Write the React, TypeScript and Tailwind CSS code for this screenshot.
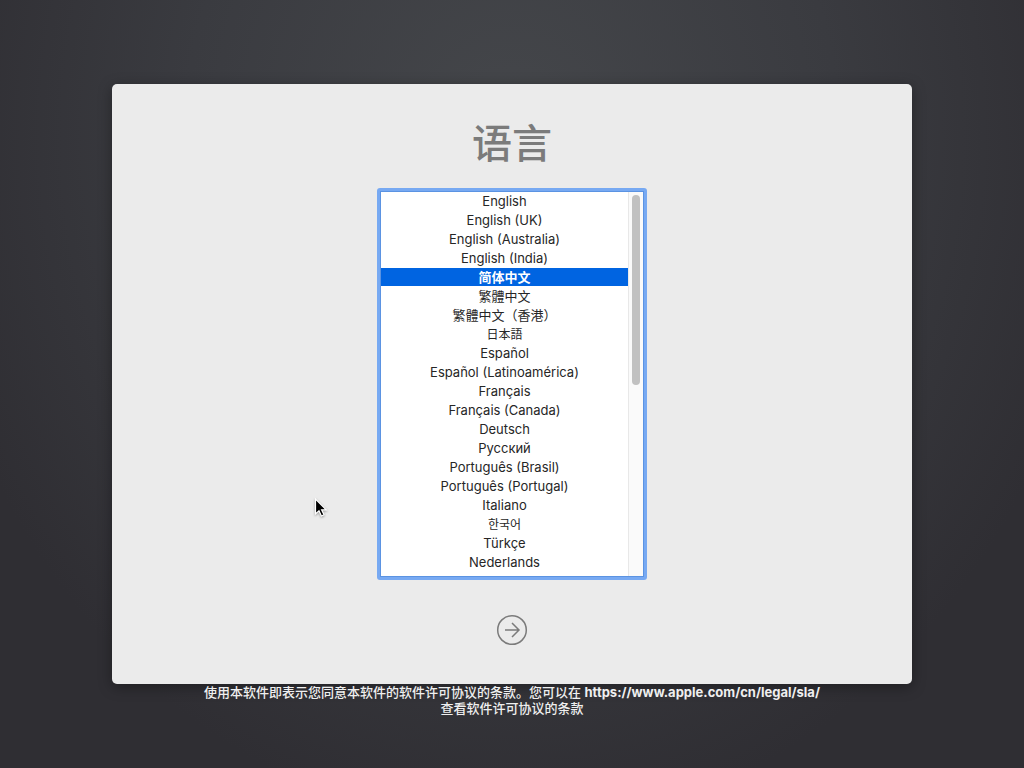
import { useState, type UIEvent } from "react";

const LANGUAGES = [
  { label: "English", lang: "en" },
  { label: "English (UK)", lang: "en-GB" },
  { label: "English (Australia)", lang: "en-AU" },
  { label: "English (India)", lang: "en-IN" },
  { label: "简体中文", lang: "zh-CN" },
  { label: "繁體中文", lang: "zh-TW" },
  { label: "繁體中文（香港）", lang: "zh-HK" },
  { label: "日本語", lang: "ja" },
  { label: "Español", lang: "es" },
  { label: "Español (Latinoamérica)", lang: "es-419" },
  { label: "Français", lang: "fr" },
  { label: "Français (Canada)", lang: "fr-CA" },
  { label: "Deutsch", lang: "de" },
  { label: "Русский", lang: "ru" },
  { label: "Português (Brasil)", lang: "pt-BR" },
  { label: "Português (Portugal)", lang: "pt-PT" },
  { label: "Italiano", lang: "it" },
  { label: "한국어", lang: "ko" },
  { label: "Türkçe", lang: "tr" },
  { label: "Nederlands", lang: "nl" },
];

function fontSize(lang: string) {
  return lang === "ja" || lang === "ko" ? "text-[12px]" : "text-[13px]";
}

function LanguageList() {
  const [selected, setSelected] = useState("zh-CN");
  const [scrollTop, setScrollTop] = useState(0);

  return (
    <div className="flex h-[392px] w-[270px] rounded-[3px] bg-[#77a9f2] p-[3px]">
      <div className="flex min-w-0 flex-1 border border-[#5b93e2] bg-white">
        <ul
          role="listbox"
          aria-labelledby="title"
          onScroll={(e: UIEvent<HTMLUListElement>) => setScrollTop(e.currentTarget.scrollTop)}
          className="min-w-0 flex-1 overflow-y-auto [scrollbar-width:none]"
        >
          {LANGUAGES.map(({ label, lang }) => (
            <li key={lang} role="presentation" className="pb-px">
              <button
                type="button"
                role="option"
                lang={lang}
                aria-selected={lang === selected}
                onClick={() => setSelected(lang)}
                className={`block h-[18px] w-full text-center leading-[19px] outline-none ${fontSize(lang)} ${
                  lang === selected ? "bg-[#0064e1] font-semibold text-white" : "text-[#262626]"
                }`}
              >
                {label}
              </button>
            </li>
          ))}
        </ul>
        <div className="w-[15px] border-l border-[#e8e8e8] bg-[#fafafa] px-[3px] py-[3px]">
          <div
            className="h-[190px] w-2 rounded-full bg-[#c1c1c1]"
            style={{ marginTop: scrollTop }}
          />
        </div>
      </div>
    </div>
  );
}

export default function App() {
  return (
    <div className="flex min-h-screen flex-col items-center bg-[#2f2e33] bg-[radial-gradient(ellipse_58%_90%_at_50%_18%,#45474b_0%,#3a3b40_55%,#2f2e33_100%)] px-4 pt-[84px] font-['Inter','Noto_Sans_CJK_SC',sans-serif]">
      <main className="relative flex w-full max-w-[800px] flex-col items-center rounded-[5px] bg-[#ebebeb] pt-[30px] pb-[38px] shadow-[0_3px_14px_rgba(0,0,0,0.35)]">
        <h1 id="title" className="text-[40px] leading-[60px] font-medium text-[#7b7b7b]">
          语言
        </h1>
        <div className="mt-3.5">
          <LanguageList />
        </div>
        <button type="button" aria-label="继续" className="mt-[34px] text-[#7b7b7b]">
          <svg className="block size-8" viewBox="0 0 32 32" fill="none" stroke="currentColor">
            <circle cx="16" cy="16" r="14.3" strokeWidth="1.5" />
            <path d="M9 16H23M16 9L23 16L16 23" strokeWidth="1.5" />
          </svg>
        </button>
        <svg
          className="absolute top-[413px] left-[201px] h-6 w-4 drop-shadow-[0_1px_1px_rgba(0,0,0,0.35)]"
          viewBox="0 0 16 24"
          aria-hidden="true"
        >
          <path
            d="M2.5 2V17L6 13.8L8.4 19L11 17.8L8.6 12.8H13.2Z"
            fill="#000"
            stroke="#fff"
            strokeWidth="1.2"
          />
        </svg>
      </main>
      <footer className="relative max-w-[660px] text-center text-[13px] leading-4 font-medium text-[#efefef]">
        <p>
          使用本软件即表示您同意本软件的软件许可协议的条款。您可以在{" "}
          <a href="https://www.apple.com/cn/legal/sla/" className="font-bold">
            https://www.apple.com/cn/legal/sla/
          </a>
          <br />
          查看软件许可协议的条款
        </p>
      </footer>
    </div>
  );
}
